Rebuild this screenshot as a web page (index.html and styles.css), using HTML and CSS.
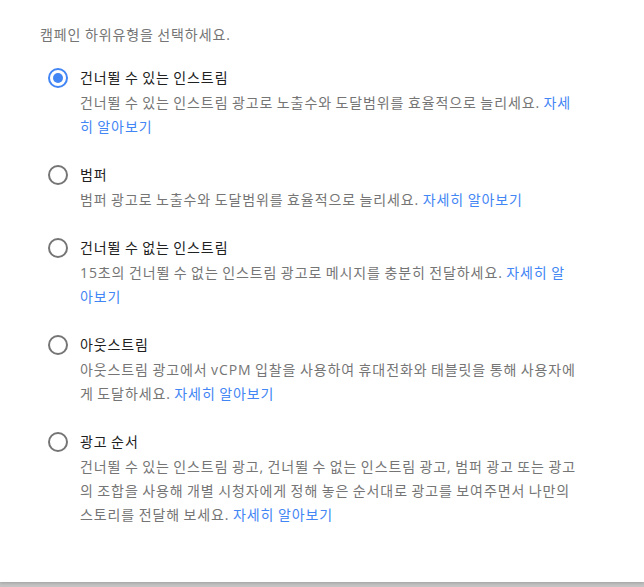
FILE: index.html
```html
<!DOCTYPE html>
<html lang="ko">
<head>
<meta charset="utf-8">
<link rel="stylesheet" href="styles.css">
</head>
<body>
<div class="card">
  <div class="title">캠페인 하위유형을 선택하세요.</div>
  <div class="options">
    <div class="option">
      <div class="label-row"><span class="radio checked"></span><span class="label">건너뛸 수 있는 인스트림</span></div>
      <div class="desc">건너뛸 수 있는 인스트림 광고로 노출수와 도달범위를 효율적으로 늘리세요. <a class="link">자세히 알아보기</a></div>
    </div>
    <div class="option">
      <div class="label-row"><span class="radio"></span><span class="label">범퍼</span></div>
      <div class="desc">범퍼 광고로 노출수와 도달범위를 효율적으로 늘리세요. <a class="link">자세히 알아보기</a></div>
    </div>
    <div class="option">
      <div class="label-row"><span class="radio"></span><span class="label">건너뛸 수 없는 인스트림</span></div>
      <div class="desc">15초의 건너뛸 수 없는 인스트림 광고로 메시지를 충분히 전달하세요. <a class="link">자세히 알아보기</a></div>
    </div>
    <div class="option">
      <div class="label-row"><span class="radio"></span><span class="label">아웃스트림</span></div>
      <div class="desc">아웃스트림 광고에서 vCPM 입찰을 사용하여 휴대전화와 태블릿을 통해 사용자에게 도달하세요. <a class="link">자세히 알아보기</a></div>
    </div>
    <div class="option">
      <div class="label-row"><span class="radio"></span><span class="label">광고 순서</span></div>
      <div class="desc">건너뛸 수 있는 인스트림 광고, 건너뛸 수 없는 인스트림 광고, 범퍼 광고 또는 광고의 조합을 사용해 개별 시청자에게 정해 놓은 순서대로 광고를 보여주면서 나만의 스토리를 전달해 보세요. <a class="link">자세히 알아보기</a></div>
    </div>
  </div>
</div>
</body>
</html>
```

FILE: styles.css
```css
html, body {
  margin: 0;
  padding: 0;
  background: #c4c4c4;
}
body {
  font-family: "Open Sans", "Noto Sans CJK KR", sans-serif;
  font-size: 14px;
  line-height: 24px;
  letter-spacing: 0.9px;
  word-spacing: -1px;
  height: 587px;
  overflow: hidden;
}
.card {
  background: #ffffff;
  height: 582px;
  box-sizing: border-box;
  padding: 23px 0 0 40px;
  box-shadow: 0 1px 3px rgba(0, 0, 0, 0.2);
}
.title {
  color: #757575;
}
.options {
  display: flex;
  flex-direction: column;
  gap: 24px;
  margin-top: 19px;
  padding-left: 8px;
}
.label-row {
  display: flex;
  align-items: center;
  gap: 12px;
  height: 24px;
}
.label {
  color: #212121;
}
.radio {
  box-sizing: border-box;
  width: 20px;
  height: 20px;
  border: 2px solid #757575;
  border-radius: 50%;
  display: flex;
  align-items: center;
  justify-content: center;
  flex: none;
}
.radio.checked {
  border-color: #4285f4;
}
.radio.checked::after {
  content: "";
  width: 10px;
  height: 10px;
  border-radius: 50%;
  background: #4285f4;
}
.desc {
  color: #757575;
  margin-top: 1px;
  margin-left: 32px;
  width: 497.4px;
}
.link {
  color: #4285f4;
  text-decoration: none;
}
```
